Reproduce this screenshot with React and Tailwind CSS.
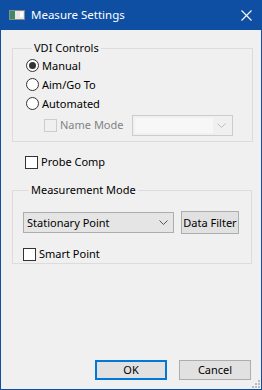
import { useState } from "react";

function Radio({ label, checked, onSelect }) {
    return (
        <label className="flex h-[19px] items-center gap-[3px]" onClick={onSelect}>
            <span className="flex h-[13px] w-[13px] items-center justify-center rounded-full border border-[#333] bg-white">
                {checked && <span className="h-[7px] w-[7px] rounded-full bg-[#333]" />}
            </span>
            <span>{label}</span>
        </label>
    );
}

function Check({ label, checked, onToggle, disabled }) {
    return (
        <label className="flex items-center gap-[3px]" onClick={disabled ? undefined : onToggle}>
            <span
                className={
                    "flex h-[13px] w-[13px] items-center justify-center border " +
                    (disabled ? "border-[#cccccc] bg-[#f0f0f0]" : "border-[#333] bg-white")
                }
            >
                {checked && (
                    <svg viewBox="0 0 11 11" className="h-[11px] w-[11px]">
                        <path d="M2 5.5l2.5 2.5L9 3" fill="none" stroke="#333" strokeWidth="1.4" />
                    </svg>
                )}
            </span>
            <span className={disabled ? "text-[#838383]" : ""}>{label}</span>
        </label>
    );
}

function Chevron({ color }) {
    return (
        <svg viewBox="0 0 9 5" className="h-[5px] w-[9px]">
            <path d="M0.5 0.5l4 4 4-4" fill="none" stroke={color} strokeWidth="1" />
        </svg>
    );
}

export default function App() {
    const [mode, setMode] = useState("manual");
    const [probeComp, setProbeComp] = useState(false);
    const [smartPoint, setSmartPoint] = useState(false);

    return (
        <div className="flex h-[390px] w-[262px] flex-col border-x border-b border-[#0f4fa3] bg-[#f0f0f0] font-['Noto_Sans',sans-serif] text-[11px] leading-[16px] text-black">
            {/* Title bar */}
            <div className="-mx-px flex h-[30px] shrink-0 items-center bg-[#0f4fa3] pl-[9px] pr-[10px] text-[12px] text-white">
                <svg viewBox="0 0 16 10" className="h-[10px] w-[16px]">
                    <rect x="0.5" y="0.5" width="15" height="9" fill="#e8e8e8" stroke="#8a8a8a" />
                    <rect x="1" y="1" width="5" height="8" fill="#3d8a64" />
                    <rect x="11" y="2" width="3" height="5" fill="#ffffff" />
                </svg>
                <span className="ml-[6px] flex-1 text-[11.5px]">Measure Settings</span>
                <svg viewBox="0 0 11 11" className="h-[11px] w-[11px]">
                    <path d="M0.5 0.5l10 10M10.5 0.5l-10 10" stroke="#fff" strokeWidth="1.1" />
                </svg>
            </div>

            {/* Body */}
            <div className="relative flex flex-1 flex-col">
                <fieldset className="ml-[11px] mt-[10px] w-[241px] border border-[#dcdcdc] pb-[5px] pl-[13px]">
                    <legend className="ml-[6px] px-[2px]">VDI Controls</legend>
                    <Radio label="Manual" checked={mode === "manual"} onSelect={() => setMode("manual")} />
                    <Radio label="Aim/Go To" checked={mode === "aim"} onSelect={() => setMode("aim")} />
                    <Radio label="Automated" checked={mode === "auto"} onSelect={() => setMode("auto")} />
                    <div className="mt-[1px] flex h-[22px] items-center pl-[18px]">
                        <Check label="Name Mode" disabled />
                        <div className="ml-auto mr-[19px] flex h-[21px] w-[101px] items-center border border-[#cccccc] bg-[#f0f0f0] p-[2px]">
                            <div className="h-full flex-1 bg-[#f7f7f7]" />
                            <div className="flex w-[17px] justify-center">
                                <Chevron color="#bdbdbd" />
                            </div>
                        </div>
                    </div>
                </fieldset>

                <div className="ml-[24px] mt-[12px]">
                    <Check label="Probe Comp" checked={probeComp} onToggle={() => setProbeComp(!probeComp)} />
                </div>

                <fieldset className="ml-[11px] mt-[12px] w-[240px] border border-[#dcdcdc] pb-[1px] pl-[10px]">
                    <legend className="ml-[6px] px-[2px]">Measurement Mode</legend>
                    <div className="mt-[13px] flex items-center gap-[7px]">
                        <div className="flex h-[21px] w-[151px] items-center border border-[#adadad] bg-[#e5e5e5] pl-[3px] pr-[5px]">
                            <span className="flex-1">Stationary Point</span>
                            <Chevron color="#555" />
                        </div>
                        <button className="h-[23px] w-[58px] whitespace-nowrap border border-[#adadad] bg-[#e1e1e1]">Data Filter</button>
                    </div>
                    <div className="mt-[12px]">
                        <Check label="Smart Point" checked={smartPoint} onToggle={() => setSmartPoint(!smartPoint)} />
                    </div>
                </fieldset>

                <div className="mt-auto mb-[9px] flex justify-end gap-[12px] pr-[10px]">
                    <button className="h-[20px] w-[72px] border-2 border-[#0078d7] bg-[#e1e1e1]">OK</button>
                    <button className="h-[20px] w-[72px] border border-[#adadad] bg-[#e1e1e1]">Cancel</button>
                </div>

                {/* size grip */}
                <svg viewBox="0 0 10 10" className="absolute bottom-[1px] right-[1px] h-[10px] w-[10px]">
                    {[[8, 2], [5, 5], [8, 5], [2, 8], [5, 8], [8, 8]].map(([x, y], i) => (
                        <rect key={i} x={x} y={y} width="2" height="2" fill="#bcbcbc" />
                    ))}
                </svg>
            </div>
        </div>
    );
}
